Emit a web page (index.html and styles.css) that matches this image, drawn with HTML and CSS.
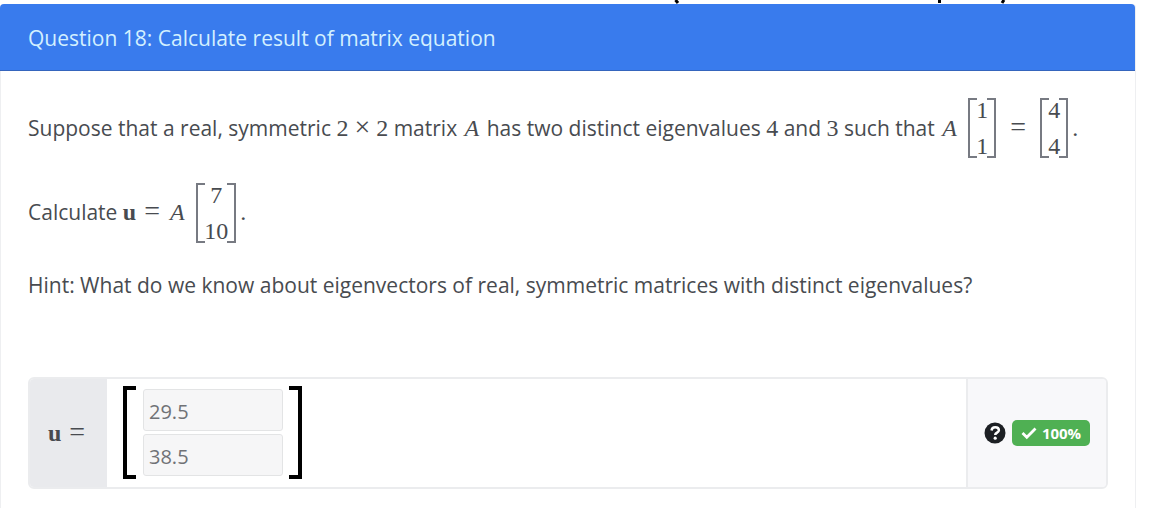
FILE: index.html
```html
<!DOCTYPE html>
<html lang="en">
<head>
<meta charset="utf-8">
<meta name="viewport" content="width=device-width, initial-scale=1">
<title>Question 18</title>
<link rel="stylesheet" href="styles.css">
</head>
<body>
<svg class="top-edge" viewBox="0 0 1172 4" preserveAspectRatio="none" aria-hidden="true">
  <path d="M675.500 0L678 3M939.500 0V3M1004 0L1002 3" fill="none" stroke="#000" stroke-width="3"/>
</svg>
<main class="card">
  <h1 class="card-header">Question 18: Calculate result of matrix equation</h1>
  <div class="card-body">
    <p class="line tall">Suppose that a real, symmetric <span class="math">2<span class="op">×</span>2</span> matrix <i class="math var">A</i> has two distinct eigenvalues <span class="math">4</span> and <span class="math">3</span> such that <i class="math var">A</i> <span class="math matrix"><span>1</span><span>1</span></span><span class="math op eq">=</span><span class="math matrix"><span>4</span><span>4</span></span><span class="math stop">.</span></p>
    <p class="line tall">Calculate <span class="math"><b>u</b><span class="op rel">=</span><i class="var">A</i></span> <span class="math matrix"><span>7</span><span>10</span></span><span class="math stop">.</span></p>
    <p class="line hint">Hint: What do we know about eigenvectors of real, symmetric matrices with distinct eigenvalues?</p>
    <div class="answer">
      <div class="answer-label math"><span><b>u</b><span class="op rel">=</span></span></div>
      <div class="answer-main">
        <div class="bracket"></div>
        <div class="fields">
          <input class="field" type="text" value="29.5" aria-label="u, row 1">
          <input class="field" type="text" value="38.5" aria-label="u, row 2">
        </div>
        <div class="bracket right"></div>
      </div>
      <div class="answer-status">
        <button class="help" type="button" aria-label="Help">
          <svg viewBox="0 0 22 22" aria-hidden="true"><circle cx="11" cy="11" r="10.500" fill="#1d2024"/><path d="M7.500 8.500C7.800 6.200 9.200 5.200 11.200 5.200C13.400 5.200 14.900 6.400 14.900 8.200C14.900 10.700 11.200 10.600 11.200 13" fill="none" stroke="#fff" stroke-width="2.500"/><circle cx="11.200" cy="16.200" r="1.600" fill="#fff"/></svg>
        </button>
        <span class="badge">
          <svg viewBox="0 0 16 14" aria-hidden="true"><path d="M1.500 7L5.800 11.200L14.500 2.500" fill="none" stroke="#fff" stroke-width="2.800"/></svg>
          100%
        </span>
      </div>
    </div>
  </div>
</main>
</body>
</html>
```
FILE: styles.css
```css
* { box-sizing: border-box; }
body {
  margin: 0;
  background: #fff;
  color: #484b50;
  font-family: "Open Sans", "Noto Sans", sans-serif;
  font-size: 21px;
}
.top-edge { display: block; width: 100%; height: 4px; }
.card {
  margin-right: 36px;
  border: 1px solid #eeeff1;
  border-top: 0;
  border-bottom: 0;
  border-radius: 4px 4px 0 0;
}
.card-header {
  margin: 0 0 0 -1px;
  padding: 20px 28px 18px;
  border-bottom: 1px solid #3565bd;
  border-radius: 4px 4px 0 0;
  background: #397bed;
  color: #d3f0ff;
  font-size: 21px;
  font-weight: 400;
  line-height: 28px;
}
.card-body { padding: 25px 27px 19px; }
.line { margin: 0 0 18px; line-height: 32px; }
.tall { line-height: 64px; }
.hint { margin-top: 22px; }
.math { font-family: "Liberation Serif", serif; font-size: 24px; }
.var { margin: 0 2px; }
.op { margin: 0 6px; font-size: 28px; line-height: 1; }
.rel { margin: 0 8px; }
.eq { margin: 0 10px 0 14px; }
.matrix {
  display: inline-flex;
  flex-direction: column;
  align-items: center;
  justify-content: space-between;
  position: relative;
  vertical-align: middle;
  height: 60px;
  margin: 0 0 4px 4px;
  padding: 0 8px;
  line-height: 24px;
}
.matrix::before, .matrix::after {
  content: "";
  position: absolute;
  top: 0;
  bottom: 0;
  width: 7px;
  border: 2px solid #777a82;
}
.matrix::before { left: 0; border-right: 0; }
.matrix::after { right: 0; border-left: 0; }
.stop { margin-left: 4px; }
.answer {
  display: flex;
  margin-top: 76px;
  min-height: 112px;
  border: 2px solid #ebecee;
  border-radius: 6px;
  overflow: hidden;
}
.answer-label {
  display: flex;
  align-items: center;
  padding-left: 18px;
  width: 77px;
  background: #e9eaed;
}
.answer-main { display: flex; flex: 1; align-items: center; padding-left: 16px; }
.bracket { width: 13px; height: 93px; border: 4px solid #000; border-right: 0; }
.bracket.right { border-right: 4px solid #000; border-left: 0; }
.fields { display: grid; gap: 3px; margin: 0 6px 0 7px; }
.field {
  width: 140px;
  height: 42px;
  padding: 3px 5px 0;
  border: 1px solid #e3e4e5;
  border-radius: 3px;
  background: #f6f6f7;
  color: #707276;
  font: 20px "Open Sans", "Noto Sans", sans-serif;
}
.answer-status {
  display: flex;
  align-items: center;
  gap: 6px;
  padding: 0 16px;
  border-left: 2px solid #ebecee;
  background: #f8f8fa;
}
.help { width: 22px; height: 22px; padding: 0; border: 0; background: none; }
.help svg { display: block; width: 22px; height: 22px; }
.badge {
  display: flex;
  align-items: center;
  justify-content: center;
  gap: 5px;
  width: 78px;
  height: 26px;
  border-radius: 5px;
  background: #4fb053;
  color: #fff;
  font-size: 15px;
  font-weight: 700;
}
.badge svg { width: 16px; height: 14px; }
```
